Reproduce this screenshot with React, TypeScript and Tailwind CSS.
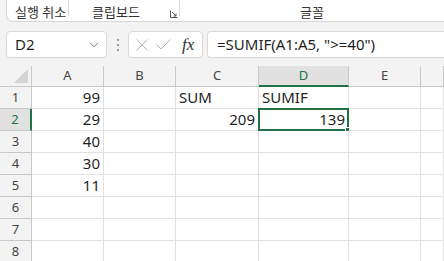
import { ChevronDown } from 'lucide-react'

const cols = ['A', 'B', 'C', 'D', 'E', '']
const rows = [1, 2, 3, 4, 5, 6, 7, 8]

const data: Record<string, { text: string; right?: boolean }> = {
  A1: { text: '99', right: true },
  A2: { text: '29', right: true },
  A3: { text: '40', right: true },
  A4: { text: '30', right: true },
  A5: { text: '11', right: true },
  C1: { text: 'SUM' },
  C2: { text: '209', right: true },
  D1: { text: 'SUMIF' },
  D2: { text: '139', right: true },
}

const uiFont = "font-['Noto_Sans','Noto_Sans_CJK_KR',sans-serif]"

export default function App() {
  return (
    <div className={`relative w-[444px] h-[261px] overflow-hidden bg-[#f3f3f3] text-[#1f1f1f] ${uiFont}`}>
      {/* Ribbon group labels */}
      <div className="ml-[6px] h-[22px] flex bg-white border-l border-b border-[#d6d6d6] rounded-bl-[7px] text-[13px] leading-none text-[#333]">
        <div className="w-[62px] pl-[8px] pt-[6px] border-r border-[#d6d6d6] mb-[5px] whitespace-nowrap">실행 취소</div>
        <div className="relative w-[111px] pt-[6px] border-r border-[#d6d6d6] mb-[5px]">
          <span className="absolute left-[23px] top-[6px] whitespace-nowrap">클립보드</span>
          <svg className="absolute left-[101px] top-[10px]" width="8" height="8" viewBox="0 0 8 8">
            <path d="M0.5 0.5 V7.5 H7.5" stroke="#555" fill="none" />
            <path d="M2 2 L6 6 M6 3.5 V6 H3.5" stroke="#555" fill="none" />
          </svg>
        </div>
        <div className="flex-1 pl-[120px] pt-[6px] whitespace-nowrap">글꼴</div>
      </div>

      {/* Formula bar */}
      <div className="flex items-center h-[27px] mt-[9px] mb-[8px]">
        <div className="ml-[6px] w-[101px] h-full bg-white border border-[#dadada] rounded-[4px] flex items-center justify-between pl-[8px] pr-[5px] text-[15px]">
          <span>D2</span>
          <ChevronDown className="w-[14px] h-[14px] text-[#555]" strokeWidth={1.5} />
        </div>
        <div className="w-[21px] flex flex-col items-center gap-[3px]">
          <span className="w-[2px] h-[2px] bg-[#9a9a9a]" />
          <span className="w-[2px] h-[2px] bg-[#9a9a9a]" />
          <span className="w-[2px] h-[2px] bg-[#9a9a9a]" />
        </div>
        <div className="w-[75px] h-full bg-white border border-[#dadada] rounded-[4px] flex items-center pl-[7px] gap-[8px]">
          <svg width="12" height="12" viewBox="0 0 12 12">
            <path d="M0.5 0.5 L11.5 11.5 M11.5 0.5 L0.5 11.5" stroke="#b4b4b4" strokeWidth="1" />
          </svg>
          <svg width="15" height="11" viewBox="0 0 15 11">
            <path d="M0.5 5.5 L5 10 L14.5 0.5" stroke="#b4b4b4" strokeWidth="1" fill="none" />
          </svg>
          <span className="font-['Liberation_Serif',serif] italic text-[17px] leading-none text-[#333] ml-[3px]">fx</span>
        </div>
        <div className="ml-[4px] flex-1 h-full bg-white border border-r-0 border-[#dadada] rounded-l-[4px] flex items-center pl-[9px] text-[15px] whitespace-nowrap">
          =SUMIF(A1:A5, "&gt;=40")
        </div>
      </div>

      {/* Sheet grid */}
      <div className="relative grid grid-cols-[32px_72px_72px_83px_90px_72px_1fr] text-[15px]">
        {/* header row */}
        <div className="h-[21px] border-r border-b border-[#c8c8c8] relative">
          <svg className="absolute right-[3px] bottom-[3px]" width="14" height="14" viewBox="0 0 14 14">
            <polygon points="14,0 14,14 0,14" fill="#d4d4d4" />
          </svg>
        </div>
        {cols.map((c) =>
          c === 'D' ? (
            <div key={c} className="h-[21px] bg-[#e1e1e1] border-r border-[#c8c8c8] border-b-2 border-b-[#217346] text-[13px] text-[#217346] flex items-center justify-center">
              {c}
            </div>
          ) : (
            <div key={c || 'F'} className="h-[21px] border-r border-b border-[#c8c8c8] last:border-r-0 text-[13px] text-[#444] flex items-center justify-center">
              {c}
            </div>
          )
        )}

        {rows.map((r) => (
          <>
            <div
              key={`h${r}`}
              className={
                r === 2
                  ? 'h-[22px] bg-[#e1e1e1] border-b border-[#c8c8c8] border-r-2 border-r-[#217346] text-[13px] text-[#217346] flex items-center justify-center'
                  : 'h-[22px] border-r border-b border-[#c8c8c8] text-[13px] text-[#444] flex items-center justify-center'
              }
            >
              {r}
            </div>
            {cols.map((c) => {
              const cell = data[`${c}${r}`]
              const sel = c === 'D' && r === 2
              return (
                <div
                  key={`${c}${r}`}
                  className={`relative h-[22px] bg-white border-r border-b border-[#e1e1e1] px-[3px] flex items-center whitespace-nowrap ${cell?.right ? 'justify-end' : ''}`}
                >
                  {cell?.text}
                  {sel && (
                    <span className="absolute -left-[1px] -top-[1px] -right-[1px] -bottom-[1px] border-2 border-[#217346]">
                      <span className="absolute -right-[4px] -bottom-[4px] w-[6px] h-[6px] bg-[#217346] border border-white" />
                    </span>
                  )}
                </div>
              )
            })}
          </>
        ))}
      </div>
    </div>
  )
}
